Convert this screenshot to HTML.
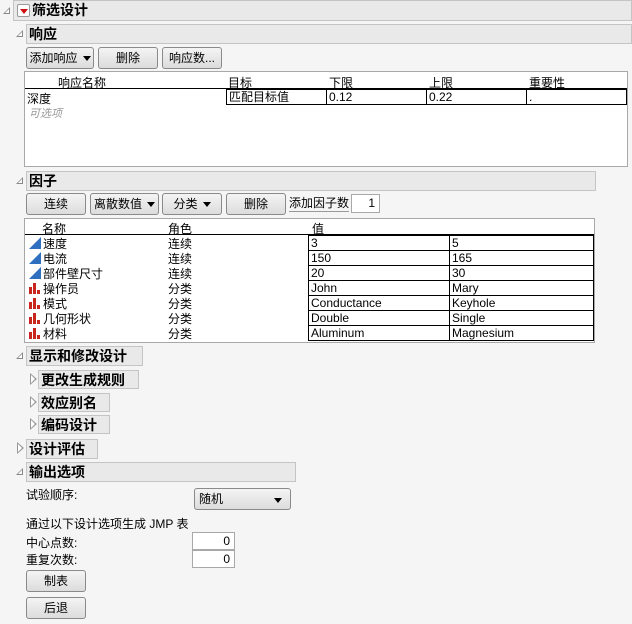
<!DOCTYPE html>
<html><head><meta charset="utf-8"><style>
*{box-sizing:border-box;margin:0;padding:0}
body{width:632px;height:624px;background:#f5f5f5;font-family:"Liberation Sans","Noto Sans CJK SC",sans-serif;font-size:12px;color:#000;position:relative;overflow:hidden}
.a{position:absolute;white-space:nowrap}
.bar{position:absolute;background:#e9e9e9;border:1px solid #c4c4c4;font-weight:bold;font-size:14px;line-height:19px;padding-left:2px}
.tri{position:absolute;width:0;height:0;border-left:7px solid transparent;border-bottom:7px solid #888}
.tri:after{content:"";position:absolute;left:-5px;top:2px;border-left:4px solid transparent;border-bottom:4px solid #fff}
.rt{position:absolute;width:0;height:0;border-top:6px solid transparent;border-bottom:6px solid transparent;border-left:7px solid #999}
.rt:after{content:"";position:absolute;left:-6px;top:-4px;border-top:4px solid transparent;border-bottom:4px solid transparent;border-left:4px solid #fff}
.btn{position:absolute;height:22px;border:1px solid #8a8a8a;border-radius:3px;background:linear-gradient(#f4f4f4,#dcdcdc);text-align:center;line-height:20px}
.dd:after{content:"";display:inline-block;margin-left:5px;vertical-align:middle;border-left:4px solid transparent;border-right:4px solid transparent;border-top:5px solid #000}
.box{position:absolute;background:#fff;border:1px solid #a8a8a8}
.cell{position:absolute;border:1px solid #000;background:#fff;height:16px;line-height:14px;padding-left:2px}
.inp{position:absolute;background:#fff;border:1px solid #a8a8a8;text-align:right;padding-right:4px;line-height:17px}
.tc{position:absolute;width:0;height:0;border-left:12px solid transparent;border-bottom:12px solid #2e6fc0}
.bc{position:absolute;width:12px;height:11px}
.bc i{position:absolute;bottom:0;background:#c8261c;width:3px}
</style></head><body>
<div class="tri" style="left:3px;top:7px"></div>
<div class="bar" style="left:13px;top:0;width:619px;height:21px;padding-left:18px">筛选设计</div>
<div class="a" style="left:17px;top:4px;width:13px;height:13px;border:1px solid #999;background:#fff;border-radius:2px"><div style="position:absolute;left:2px;top:4px;border-left:4px solid transparent;border-right:4px solid transparent;border-top:5px solid #d01010"></div></div>

<div class="tri" style="left:16px;top:30px"></div>
<div class="bar" style="left:26px;top:24px;width:606px;height:20px">响应</div>
<div class="btn dd" style="left:26px;top:47px;width:68px">添加响应</div>
<div class="btn" style="left:98px;top:47px;width:60px">删除</div>
<div class="btn" style="left:162px;top:47px;width:60px">响应数...</div>
<div class="box" style="left:24px;top:71px;width:604px;height:96px"></div>
<div class="a" style="left:58px;top:74px">响应名称</div>
<div class="a" style="left:228px;top:74px">目标</div>
<div class="a" style="left:329px;top:74px">下限</div>
<div class="a" style="left:429px;top:74px">上限</div>
<div class="a" style="left:529px;top:74px">重要性</div>
<div class="a" style="left:25px;top:88px;width:602px;height:1px;background:#000"></div>
<div class="a" style="left:27px;top:90px">深度</div>
<div class="cell" style="left:226px;top:89px;width:101px">匹配目标值</div>
<div class="cell" style="left:326px;top:89px;width:101px">0.12</div>
<div class="cell" style="left:426px;top:89px;width:101px">0.22</div>
<div class="cell" style="left:526px;top:89px;width:101px">.</div>
<div class="a" style="left:29px;top:105px;color:#999;font-style:italic;font-size:11px">可选项</div>

<div class="tri" style="left:16px;top:177px"></div>
<div class="bar" style="left:26px;top:171px;width:570px;height:20px">因子</div>
<div class="btn" style="left:26px;top:193px;width:60px">连续</div>
<div class="btn dd" style="left:90px;top:193px;width:69px">离散数值</div>
<div class="btn dd" style="left:162px;top:193px;width:60px">分类</div>
<div class="btn" style="left:226px;top:193px;width:60px">删除</div>
<div class="a" style="left:289px;top:196px;border-bottom:1px solid #999;line-height:15px">添加因子数</div>
<div class="inp" style="left:351px;top:194px;width:29px;height:19px">1</div>
<div class="box" style="left:24px;top:218px;width:571px;height:125px"></div>
<div class="a" style="left:42px;top:220px">名称</div>
<div class="a" style="left:168px;top:220px">角色</div>
<div class="a" style="left:312px;top:220px">值</div>
<div class="a" style="left:25px;top:234px;width:569px;height:1px;background:#000"></div>
<div class="tc" style="left:29px;top:237px"></div><div class="a" style="left:43px;top:235px">速度</div><div class="a" style="left:168px;top:235px">连续</div>
<div class="tc" style="left:29px;top:252px"></div><div class="a" style="left:43px;top:250px">电流</div><div class="a" style="left:168px;top:250px">连续</div>
<div class="tc" style="left:29px;top:267px"></div><div class="a" style="left:43px;top:265px">部件壁尺寸</div><div class="a" style="left:168px;top:265px">连续</div>
<div class="bc" style="left:29px;top:283px"><i style="left:0;height:7px"></i><i style="left:4px;height:11px"></i><i style="left:8px;height:4px"></i></div><div class="a" style="left:43px;top:280px">操作员</div><div class="a" style="left:168px;top:280px">分类</div>
<div class="bc" style="left:29px;top:298px"><i style="left:0;height:7px"></i><i style="left:4px;height:11px"></i><i style="left:8px;height:4px"></i></div><div class="a" style="left:43px;top:295px">模式</div><div class="a" style="left:168px;top:295px">分类</div>
<div class="bc" style="left:29px;top:313px"><i style="left:0;height:7px"></i><i style="left:4px;height:11px"></i><i style="left:8px;height:4px"></i></div><div class="a" style="left:43px;top:310px">几何形状</div><div class="a" style="left:168px;top:310px">分类</div>
<div class="bc" style="left:29px;top:328px"><i style="left:0;height:7px"></i><i style="left:4px;height:11px"></i><i style="left:8px;height:4px"></i></div><div class="a" style="left:43px;top:325px">材料</div><div class="a" style="left:168px;top:325px">分类</div>

<div class="cell" style="left:308px;top:235px;width:142px">3</div><div class="cell" style="left:449px;top:235px;width:145px">5</div>
<div class="cell" style="left:308px;top:250px;width:142px">150</div><div class="cell" style="left:449px;top:250px;width:145px">165</div>
<div class="cell" style="left:308px;top:265px;width:142px">20</div><div class="cell" style="left:449px;top:265px;width:145px">30</div>
<div class="cell" style="left:308px;top:280px;width:142px">John</div><div class="cell" style="left:449px;top:280px;width:145px">Mary</div>
<div class="cell" style="left:308px;top:295px;width:142px">Conductance</div><div class="cell" style="left:449px;top:295px;width:145px">Keyhole</div>
<div class="cell" style="left:308px;top:310px;width:142px">Double</div><div class="cell" style="left:449px;top:310px;width:145px">Single</div>
<div class="cell" style="left:308px;top:325px;width:142px">Aluminum</div><div class="cell" style="left:449px;top:325px;width:145px">Magnesium</div>

<div class="tri" style="left:16px;top:352px"></div>
<div class="bar" style="left:26px;top:346px;width:117px;height:20px">显示和修改设计</div>
<div class="rt" style="left:30px;top:373px"></div>
<div class="bar" style="left:38px;top:370px;width:101px;height:19px">更改生成规则</div>
<div class="rt" style="left:30px;top:396px"></div>
<div class="bar" style="left:38px;top:393px;width:72px;height:19px">效应别名</div>
<div class="rt" style="left:30px;top:418px"></div>
<div class="bar" style="left:38px;top:415px;width:72px;height:19px">编码设计</div>
<div class="rt" style="left:17px;top:442px"></div>
<div class="bar" style="left:26px;top:439px;width:72px;height:20px">设计评估</div>
<div class="tri" style="left:16px;top:468px"></div>
<div class="bar" style="left:26px;top:462px;width:270px;height:20px">输出选项</div>

<div class="a" style="left:26px;top:486px">试验顺序:</div>
<div class="btn" style="left:194px;top:488px;width:97px;text-align:left;padding-left:4px">随机<span style="position:absolute;right:8px;top:9px;border-left:4px solid transparent;border-right:4px solid transparent;border-top:5px solid #000"></span></div>
<div class="a" style="left:26px;top:515px">通过以下设计选项生成 JMP 表</div>
<div class="a" style="left:26px;top:534px">中心点数:</div>
<div class="inp" style="left:192px;top:532px;width:43px;height:18px">0</div>
<div class="a" style="left:26px;top:551px">重复次数:</div>
<div class="inp" style="left:192px;top:550px;width:43px;height:18px">0</div>
<div class="btn" style="left:26px;top:570px;width:60px">制表</div>
<div class="btn" style="left:26px;top:597px;width:60px">后退</div>
</body></html>
